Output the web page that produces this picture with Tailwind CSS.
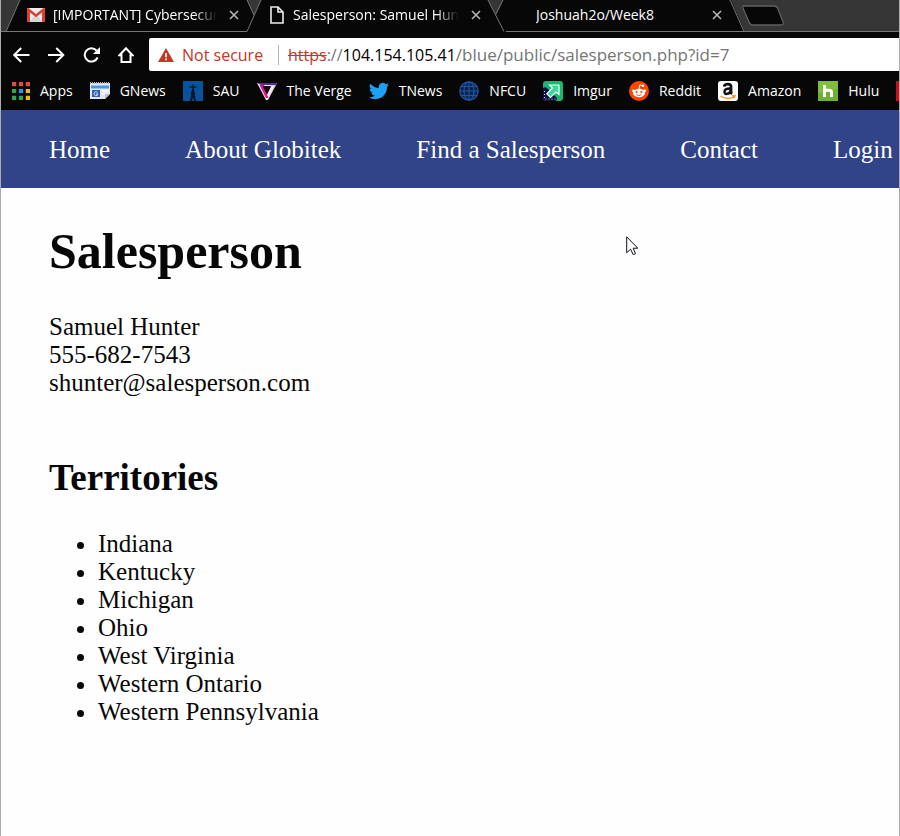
<!DOCTYPE html>
<html lang="en">
<head>
<meta charset="utf-8">
<title>Salesperson: Samuel Hunter</title>
<script src="https://cdn.jsdelivr.net/npm/@tailwindcss/browser@4"></script>
</head>
<body class="bg-[#fefefe]">
<div class="min-h-screen overflow-hidden border-x border-[#acacac] relative">

  <header class="bg-[#070707] text-white font-['Open_Sans','Noto_Sans',sans-serif] text-sm">
    <!-- Tab strip -->
    <div class="relative h-8 bg-[#363636] overflow-hidden">
      <svg class="absolute inset-0" width="898" height="32" viewBox="1 0 898 32" aria-hidden="true">
        <path d="M20 0 L6 31 V32 H745 L731 0 Z" fill="#070707"/>
        <path d="M247 0 L254 15 L261 0 Z M488 0 L496 15 L503 0 Z" fill="#363636"/>
        <g fill="none" stroke="#777" stroke-width="1">
          <path d="M20 0 L6 31.5 H247 L261 0 M247 0 L254 15 M488 0 L504 31.5 M506 31.5 H900 M503 0 L496 14 M730 0 L744 31.5 M1 31.5 H6"/>
        </g>
        <path d="M743 6 H774 Q777 6 778 9 L783 22 Q784 25 781 25 H753 Q750 25 749 22 L743 8 Q742 6 744 6 Z" fill="#070707" stroke="#606060" stroke-width="1.3"/>
      </svg>
      <div class="relative flex h-[30px] items-center pl-[5px]" role="tablist">
        <div class="flex w-[242px] shrink-0 items-center pl-[21px]">
          <svg class="shrink-0" width="18" height="14" viewBox="0 0 18 14" aria-hidden="true"><rect width="18" height="14" rx="1" fill="#f0efee"/><path d="M3 14 L7 7.5 L9 9 L11 7.5 L15 14Z" fill="#d8d6d4"/><path d="M0 1.2 Q0 0 1.5 0 L9 6 L16.500 0 Q18 0 18 1.200 V13 Q18 14 17 14 H15 V4.500 L9 9.300 L3 4.500 V14 H1 Q0 14 0 13Z" fill="#d8402f"/></svg>
          <button role="tab" class="ml-2 w-[164px] overflow-hidden text-left whitespace-nowrap [mask-image:linear-gradient(to_right,black_86%,transparent)]">[IMPORTANT] Cybersecurity</button>
          <button aria-label="Close tab" class="ml-3"><svg width="10" height="10" viewBox="0 0 10 10"><path d="M1 1 L9 9 M9 1 L1 9" stroke="#b5b5b5" stroke-width="1.6"/></svg></button>
        </div>
        <div class="flex w-[242px] shrink-0 items-center pl-[21px]">
          <svg class="mx-px shrink-0" width="14" height="18" viewBox="0 0 14 18" aria-hidden="true"><path d="M1 1 H8 L13 6 V17 H1Z M8 1 V6 H13" fill="none" stroke="#eee" stroke-width="1.600"/></svg>
          <button role="tab" aria-selected="true" class="ml-2 w-[166px] overflow-hidden text-left whitespace-nowrap [mask-image:linear-gradient(to_right,black_86%,transparent)]">Salesperson: Samuel Hunter</button>
          <button aria-label="Close tab" class="ml-3"><svg width="10" height="10" viewBox="0 0 10 10"><path d="M1 1 L9 9 M9 1 L1 9" stroke="#b5b5b5" stroke-width="1.6"/></svg></button>
        </div>
        <div class="flex w-[242px] shrink-0 items-center pl-[46px]">
          <button role="tab" class="w-[164px] overflow-hidden text-left whitespace-nowrap">Joshuah2o/Week8</button>
          <button aria-label="Close tab" class="ml-3"><svg width="10" height="10" viewBox="0 0 10 10"><path d="M1 1 L9 9 M9 1 L1 9" stroke="#b5b5b5" stroke-width="1.6"/></svg></button>
        </div>
      </div>
    </div>

    <!-- Toolbar -->
    <div class="flex items-center pt-1.5 pl-3">
      <div class="flex w-[136px] shrink-0 items-center gap-[18px]">
        <button aria-label="Back"><svg width="17" height="16" viewBox="0 0 17 16"><path d="M16.500 8 H1.500 M8.200 1 L1.200 8 L8.200 15" fill="none" stroke="#fff" stroke-width="2"/></svg></button>
        <button aria-label="Forward"><svg width="17" height="16" viewBox="0 0 17 16"><path d="M0 8 H15 M8.300 1 L15.300 8 L8.300 15" fill="none" stroke="#fff" stroke-width="2"/></svg></button>
        <button aria-label="Reload"><svg width="17" height="16" viewBox="0 0 17 16"><path d="M14.600 10.500 A6.700 6.700 0 1 1 13.500 3.500" fill="none" stroke="#fff" stroke-width="2"/><path d="M17 0 V7 H10Z" fill="#fff"/></svg></button>
        <button aria-label="Home page"><svg width="16" height="16" viewBox="0 0 16 16"><path d="M8 1.300 L1.500 8.200 H3.500 V15 H12.500 V8.200 H14.500Z" fill="none" stroke="#fff" stroke-width="2"/></svg></button>
      </div>
      <div class="flex h-[33px] min-w-0 flex-1 items-center rounded-l-xs bg-white pl-[9px] text-base text-[#757575]">
        <svg class="shrink-0" width="16" height="14" viewBox="0 0 16 14" aria-hidden="true"><path d="M8 0 L16 14 H0Z" fill="#c63626"/><path d="M8 5 V9.300 M8 10.500 V12.300" stroke="#fff" stroke-width="1.700"/></svg>
        <span class="ml-2 w-[84px] shrink-0 whitespace-nowrap text-[#c63626]">Not secure</span>
        <span class="mx-3 h-5 w-px shrink-0 bg-[#b4b4b4]"></span>
        <div class="-ml-1 flex min-w-0 flex-1 items-baseline px-px">
          <label for="url" class="flex shrink-0"><span class="text-[#c63626] line-through">https</span><span>://</span><span class="text-black">104.154.105.41</span></label>
          <input id="url" type="text" value="/blue/public/salesperson.php?id=7" class="min-w-0 flex-1 bg-transparent text-[17px] leading-6 outline-none">
        </div>
      </div>
    </div>

    <!-- Bookmarks -->
    <nav aria-label="Bookmarks" class="flex h-[39px] items-center gap-[17px] overflow-hidden pl-[11px] whitespace-nowrap">
      <a href="#" class="flex shrink-0 items-center gap-2.5"><svg width="18" height="18" viewBox="0 0 17 17"><g fill="#e04a3f"><path d="M0 0h4v4H0zM6.500 0h4v4h-4zM13 0h4v4h-4z"/></g><path d="M0 6.500h4v4H0zM0 13h4v4H0zM6.500 13h4v4h-4z" fill="#2fa55a"/><path d="M6.500 6.500h4v4h-4z" fill="#3b8bf0"/><path d="M13 6.500h4v4h-4zM13 13h4v4h-4z" fill="#f5b517"/></svg>Apps</a>
      <a href="#" class="flex shrink-0 items-center gap-2.5"><svg width="20" height="20" viewBox="0 0 20 20"><path d="M0 2h20v11l-5 5H0z" fill="#e4e8ee"/><path d="M0 2h20" stroke="#bbb" stroke-width="2" stroke-dasharray="1 1"/><path d="M1 4.500h18v3H1z" fill="#3d9cf0"/><path d="M2 9h8v7H2z" fill="#2f5fb3"/><path d="M12 10h6M12 13h5" stroke="#fff" stroke-width="1.500"/><path d="M15 18v-5h5z" fill="#b9bec6"/><path d="M7.500 11.300A2 2 0 1 0 8 13H6" fill="none" stroke="#fff" stroke-width=".8"/></svg>GNews</a>
      <a href="#" class="flex shrink-0 items-center gap-2.5"><svg width="20" height="20" viewBox="0 0 20 20"><path d="M0 0h20v20H0z" fill="#07539c"/><path d="M10 3.500V10M6.500 6h7" stroke="#061c38" stroke-width="1.500"/><path d="M9.200 8h1.600l1.400 5-.6 1 1.600 6h-2L10 16l-1.200 4h-2l1.600-6-.6-1z" fill="#061426"/></svg>SAU</a>
      <a href="#" class="flex shrink-0 items-center gap-2.5"><svg width="20" height="20" viewBox="0 0 20 20"><path d="M0 2h20L11 19H9z" fill="#eee"/><path d="M0 2h20l-1 2H4z" fill="#4b3292"/><path d="M2.500 4H7l3.500 7 4-6.500H18L11 17H9z" fill="#e5158f"/><path d="M5.500 5h9L10 13.500z" fill="#100812"/><path d="M14.500 4.500H18L11.500 16.500 10 14z" fill="#eee"/></svg>The Verge</a>
      <a href="#" class="flex shrink-0 items-center gap-2.5"><svg width="20" height="20" viewBox="0 1 24 22"><path fill="#1da1f2" d="M23.950 4.570a10 10 0 0 1-2.820.78 4.960 4.960 0 0 0 2.160-2.730c-.95.560-2 .96-3.120 1.190a4.920 4.920 0 0 0-8.390 4.480C7.690 8.100 4.070 6.130 1.640 3.160a4.930 4.930 0 0 0 1.520 6.570 4.900 4.900 0 0 1-2.230-.61v.06a4.920 4.920 0 0 0 3.950 4.830 5 5 0 0 1-2.210.08 4.940 4.940 0 0 0 4.600 3.420A9.870 9.870 0 0 1 0 19.540a14 14 0 0 0 7.550 2.210c9.050 0 14-7.500 14-13.980l-.02-.64a9.940 9.940 0 0 0 2.420-2.560z"/></svg>TNews</a>
      <a href="#" class="flex shrink-0 items-center gap-2.5"><svg width="20" height="20" viewBox="0 0 20 20"><circle cx="10" cy="10" r="9.500" fill="#0b2149"/><g fill="none" stroke="#1f56a0" stroke-width="1.200"><circle cx="10" cy="10" r="9.200"/><ellipse cx="10" cy="10" rx="5" ry="9.200"/><path d="M10 1v18M1 10h18M2.500 5.500h15M2.500 14.500h15"/></g></svg>NFCU</a>
      <a href="#" class="flex shrink-0 items-center gap-2.5"><svg width="20" height="20" viewBox="0 0 20 20"><rect width="20" height="20" rx="3" fill="#1bb76e"/><path d="M0 7 Q3 5 5 8 L14 17 Q14 20 12 20H3Q0 20 0 17z" fill="#0d1444"/><path d="M6.500 4H16v9.500l-3-2.500L7.500 16.500 3.800 12.800 9.500 7z" fill="#36d996" stroke="#fff" stroke-width="1.200"/><path d="M1.500 10v8h11" fill="none" stroke="#cde" stroke-width="1" stroke-dasharray="1 2"/></svg>Imgur</a>
      <a href="#" class="flex shrink-0 items-center gap-2.5"><svg width="20" height="20" viewBox="0 0 20 20"><circle cx="10" cy="10" r="10" fill="#ff4500"/><g fill="#fff"><ellipse cx="10" cy="12" rx="6" ry="4.200"/><circle cx="4.500" cy="9.800" r="1.500"/><circle cx="15.500" cy="9.800" r="1.500"/><circle cx="14" cy="4.800" r="1.300"/></g><path d="M10 8l.8-4 3 .8" fill="none" stroke="#fff"/><circle cx="7.600" cy="11" r="1.100" fill="#ff4500"/><circle cx="12.400" cy="11" r="1.100" fill="#ff4500"/><path d="M7.500 13.700q2.500 1.600 5 0" fill="none" stroke="#ff4500" stroke-width=".9"/></svg>Reddit</a>
      <a href="#" class="flex shrink-0 items-center gap-2.5"><svg width="20" height="20" viewBox="0 0 20 20"><rect width="20" height="20" rx="3" fill="#fff"/><path d="M6.200 5.700Q6.500 3.200 10 3.200T13 6.200V11Q13 12.200 14 13" fill="none" stroke="#111" stroke-width="2.800"/><path d="M12.500 7.500Q6.500 7.500 6.500 10.500T9 12.800Q12 12.800 12.500 9.500" fill="none" stroke="#111" stroke-width="2.500"/><path d="M2.500 15q7 4.500 13.500.8M14 14.800l3-.3-.8 2.700" fill="none" stroke="#f79b1e" stroke-width="1.400"/></svg>Amazon</a>
      <a href="#" class="flex shrink-0 items-center gap-2.5"><svg width="20" height="20" viewBox="0 0 20 20"><path d="M0 0h20v20H0z" fill="#6fb12f"/><path d="M0 0h20v8L0 12z" fill="#80bd40"/><path d="M6.500 4v12M13.500 16v-4.500Q13.500 9.300 11 9.300H8" fill="none" stroke="#fff" stroke-width="3"/></svg>Hulu</a>
      <a href="#" aria-label="More" class="h-5 w-5 shrink-0 bg-[#c8101c]"></a>
    </nav>
  </header>

  <div class="font-['Liberation_Serif','Times_New_Roman',serif] text-[25px] leading-7 text-[#070707]">
    <nav aria-label="Main" class="flex items-center gap-[75px] bg-[#304487] pt-[26px] pb-6 pl-12 whitespace-nowrap text-white">
      <a href="#">Home</a>
      <a href="#">About Globitek</a>
      <a href="#">Find a Salesperson</a>
      <a href="#">Contact</a>
      <a href="#">Login</a>
    </nav>
    <main class="px-12 pt-[35px]">
      <h1 class="text-[50px] leading-14 font-bold">Salesperson</h1>
      <p class="mt-[34px]">Samuel Hunter<br>555-682-7543<br>shunter@salesperson.com</p>
      <h2 class="mt-[60px] text-[37px] leading-[42px] font-bold">Territories</h2>
      <ul class="mt-[31px] list-disc pl-[49px]">
        <li>Indiana</li>
        <li>Kentucky</li>
        <li>Michigan</li>
        <li>Ohio</li>
        <li>West Virginia</li>
        <li>Western Ontario</li>
        <li>Western Pennsylvania</li>
      </ul>
    </main>
  </div>

  <!-- Pointer -->
  <svg class="pointer-events-none absolute top-[236px] left-[625px]" width="13" height="20" viewBox="0 0 13 20" aria-hidden="true"><path d="M.7 .8V16.700L4.600 13.200L7.200 18.700L9.500 17.700L7.200 12.200H11.800Z" fill="#fff" stroke="#111120" stroke-width="1"/></svg>
</div>
</body>
</html>
